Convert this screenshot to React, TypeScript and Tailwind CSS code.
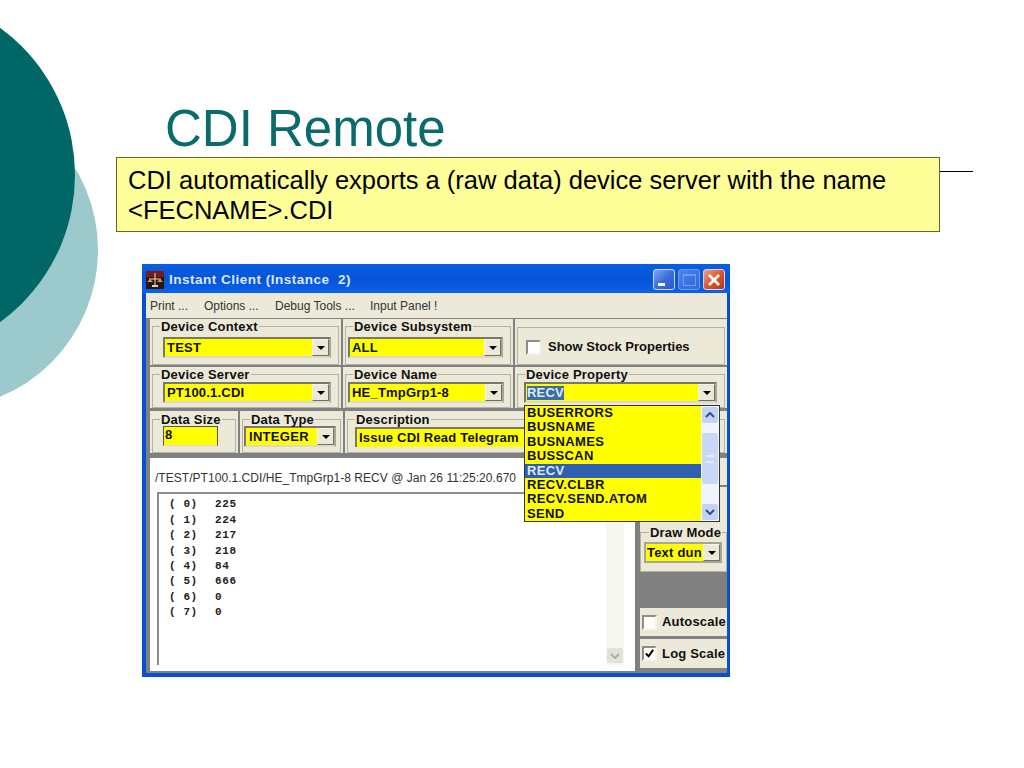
import { ReactNode } from "react";

const values = [
  ["( 0)", "225"],
  ["( 1)", "224"],
  ["( 2)", "217"],
  ["( 3)", "218"],
  ["( 4)", "84"],
  ["( 5)", "666"],
  ["( 6)", "0"],
  ["( 7)", "0"],
];

const properties = ["BUSERRORS", "BUSNAME", "BUSNAMES", "BUSSCAN", "RECV", "RECV.CLBR", "RECV.SEND.ATOM", "SEND"];

function ArrowButton() {
  return (
    <div className="flex h-[17px] w-[17px] shrink-0 items-center justify-center border border-b-[#6f6f66] border-l-[#f5f3ea] border-r-[#6f6f66] border-t-[#f5f3ea] bg-[#ece9d8]">
      <div className="h-0 w-0 border-x-[4px] border-t-[4px] border-x-transparent border-t-black" />
    </div>
  );
}

// yellow combo with the sunken border
function Combo({ text, className }: { text: string; className: string }) {
  return (
    <div className={`flex h-[21px] items-center justify-between border-2 border-b-[#ddd9c8] border-l-[#77776a] border-r-[#a8a797] border-t-[#77776a] bg-[#ffff00] pl-[2px] ${className}`}>
      <span className="whitespace-nowrap">{text}</span>
      <ArrowButton />
    </div>
  );
}

function Group({
  title,
  className,
  inner = "px-[8px]",
  children,
}: {
  title?: string;
  className: string;
  inner?: string;
  children: ReactNode;
}) {
  return (
    <div className={`shrink-0 bg-[#ece9d8] px-[2px] ${className}`}>
      <fieldset className={`h-full min-w-0 border border-[#b4b2a2] ${inner}`}>
        {title && <legend className="-ml-[1px] px-[1px] leading-[11px] whitespace-nowrap">{title}</legend>}
        {children}
      </fieldset>
    </div>
  );
}

function Check({ checked }: { checked?: boolean }) {
  return (
    <div className="flex h-[15px] w-[15px] shrink-0 items-center justify-center border-2 border-b-[#f4f3ec] border-l-[#8f8e84] border-r-[#f4f3ec] border-t-[#8f8e84] bg-white">
      {checked && (
        <svg viewBox="0 0 12 12" className="h-[11px] w-[11px]">
          <path d="M2 6l3 3 5-7" fill="none" stroke="#000" strokeWidth="2.2" />
        </svg>
      )}
    </div>
  );
}

function CaptionButton({ kind }: { kind: "min" | "max" | "close" }) {
  const bg =
    kind === "close"
      ? "border-[#cfdcf6] bg-gradient-to-br from-[#f0a08a] via-[#d9572f] to-[#b83413]"
      : kind === "min"
        ? "border-[#cfdcf6] bg-gradient-to-br from-[#7fa6ee] via-[#3b6fdc] to-[#2a57c8]"
        : "border-[#6f9af0] bg-gradient-to-br from-[#4f86ea] via-[#3a74e4] to-[#3468dc]";
  return (
    <div className={`relative flex h-[21px] w-[22px] items-center justify-center rounded-[3px] border ${bg}`}>
      {kind === "min" && <div className="mt-[10px] mr-[6px] h-[3px] w-[7px] bg-white" />}
      {kind === "max" && <div className="h-[12px] w-[13px] border border-t-2 border-[#6f9af0]" />}
      {kind === "close" && (
        <svg viewBox="0 0 14 14" className="h-[14px] w-[14px]">
          <path d="M2 2l10 10M12 2L2 12" stroke="#fff" strokeWidth="2.6" />
        </svg>
      )}
    </div>
  );
}

function AppIcon() {
  return (
    <svg viewBox="0 0 18 18" className="h-[18px] w-[18px] shrink-0">
      <rect width="18" height="18" fill="#2a1512" />
      <rect y="0" width="18" height="6" fill="#7a1a14" />
      <path d="M9 2v13M3 8h12" stroke="#e6e2d0" strokeWidth="1" />
      <path d="M1 11h6l-3-3zM11 11h6l-3-3z" fill="#e0a030" />
      <rect x="6" y="14" width="6" height="2" fill="#d8d4c0" />
    </svg>
  );
}

function InstantClient() {
  return (
    <div className="relative ml-[142px] mt-[32px] flex h-[413px] w-[588px] flex-col bg-[#0a4fd0] font-['Liberation_Sans',sans-serif] text-[13px] font-bold tracking-[0.2px] text-[#101010]">
      {/* title bar */}
      <div className="flex h-[29px] shrink-0 items-center bg-gradient-to-b from-[#0a5fe0] via-[#0754d8] to-[#0a62ea] pl-[4px] pr-[5px] pt-[2px]">
        <AppIcon />
        <span className="ml-[5px] whitespace-pre pt-[2px] text-[13.5px] tracking-[0.5px] text-[#dbe8ff]">Instant Client (Instance  2)</span>
        <div className="ml-auto flex gap-[3px]">
          <CaptionButton kind="min" />
          <CaptionButton kind="max" />
          <CaptionButton kind="close" />
        </div>
      </div>

      {/* menu */}
      <div className="ml-[4px] mr-[3px] flex h-[25px] shrink-0 items-center bg-[#ece9d8] pl-[4px] text-[12px] font-normal tracking-[0] text-[#333333]">
        <span className="w-[54px]">Print ...</span>
        <span className="w-[71px]">Options ...</span>
        <span className="w-[95px]">Debug Tools ...</span>
        <span>Input Panel !</span>
      </div>

      {/* client area */}
      <div className="mb-[4px] ml-[4px] mr-[3px] flex min-h-0 flex-1 flex-col bg-[#808080] pl-[4px] pt-[1px]">
        <div className="flex h-[46px] shrink-0 gap-[2px]">
          <Group title="Device Context" className="w-[191px] pt-[2px]">
            <Combo text="TEST" className="ml-[2px] mt-[5px] w-[168px]" />
          </Group>
          <Group title="Device Subsystem" className="w-[170px] pt-[2px]">
            <Combo text="ALL" className="-ml-[6px] mt-[5px] w-[155px]" />
          </Group>
          <Group className="w-[212px] pt-[8px]" inner="flex items-center gap-[7px] pl-[8px] pt-[2px]">
            <Check />
            <span className="whitespace-nowrap tracking-[0]">Show Stock Properties</span>
          </Group>
        </div>

        <div className="mt-[2px] flex h-[41px] shrink-0 gap-[2px]">
          <Group title="Device Server" className="w-[191px] pt-[2px]">
            <Combo text="PT100.1.CDI" className="ml-[2px] mt-[2px] w-[168px]" />
          </Group>
          <Group title="Device Name" className="w-[170px] pt-[2px]">
            <Combo text="HE_TmpGrp1-8" className="-ml-[6px] mt-[2px] w-[156px]" />
          </Group>
          <Group title="Device Property" className="w-[212px] pt-[2px]">
            <div className="-ml-[2px] mt-[2px] flex h-[21px] w-[193px] items-center justify-between border-2 border-b-[#ddd9c8] border-l-[#77776a] border-r-[#a8a797] border-t-[#77776a] bg-[#ffff00] pl-[1px]">
              <span className="bg-[#3a6ea5] leading-[14px] text-[#dfe8ff]">RECV</span>
              <ArrowButton />
            </div>
          </Group>
        </div>

        <div className="mt-[3px] flex h-[42px] shrink-0 gap-[2px]">
          <Group title="Data Size" className="w-[88px] pt-[3px]">
            <div className="ml-[2px] mt-[1px] h-[20px] w-[55px] border border-b-[#ddd9c8] border-l-[#55554c] border-r-[#55554c] border-t-[#55554c] bg-[#ffff00] pl-[1px] leading-[16px]">8</div>
          </Group>
          <Group title="Data Type" className="w-[103px] pt-[3px]">
            <Combo text="INTEGER" className="-ml-[7px] mt-[1px] w-[92px] pl-[3px] tracking-[0.3px]" />
          </Group>
          <Group title="Description" className="w-[382px] pt-[3px]">
            <div className="-ml-[1px] mt-[2px] flex h-[20px] items-center border-l-2 border-t-2 border-[#77776a] bg-[#ffff00] pl-[2px]">Issue CDI Read Telegram</div>
          </Group>
        </div>

        {/* plot + side column */}
        <div className="mt-[5px] flex min-h-0 flex-1 pb-[2px]">
          <div className="flex w-[485px] shrink-0 flex-col bg-white px-[5px]">
            <div className="flex h-[34px] shrink-0 items-center pt-[5px] text-[12px] font-normal tracking-[0.04px] text-[#333333]">
              /TEST/PT100.1.CDI/HE_TmpGrp1-8 RECV @ Jan 26 11:25:20.670
            </div>
            <div className="mb-[6px] ml-[2px] mr-[6px] flex min-h-0 flex-1 border-l-2 border-t-2 border-[#8c8c8c]">
              <div className="flex-1 pl-[10px] pt-[3px] font-['Liberation_Mono',monospace] text-[11px] tracking-[0.6px] text-[#222222]">
                {values.map(([idx, val]) => (
                  <div key={idx} className="flex h-[15.4px] items-center whitespace-pre">
                    <span className="w-[46px]">{idx}</span>
                    <span>{val}</span>
                  </div>
                ))}
              </div>
              <div className="flex w-[18px] shrink-0 items-end justify-center bg-[#f7f7f2] pb-[2px]">
                <div className="flex h-[15px] w-[16px] items-center justify-center rounded-[2px] bg-[#dfe3dc]">
                  <svg viewBox="0 0 10 6" className="h-[6px] w-[10px]">
                    <path d="M1 1l4 4 4-4" fill="none" stroke="#a9b0a8" strokeWidth="2" />
                  </svg>
                </div>
              </div>
            </div>
          </div>

          <div className="ml-[5px] flex min-w-0 flex-1 flex-col">
            <div className="h-[27px] shrink-0 bg-[#ece9d8]" />
            <div className="mt-[2px] h-[35px] shrink-0 bg-[#ece9d8]" />
            <Group title="Draw Mode" className="h-[50px] w-full !px-0 pt-[5px]" inner="pl-[3px] pr-[2px] [&>legend]:ml-[5px]">
              <div className="mt-[4px] flex h-[21px] w-[78px] items-center justify-between border-2 border-[#a8a797] bg-[#ffff00] pl-[1px]">
                <span className="whitespace-nowrap">Text dun</span>
                <ArrowButton />
              </div>
            </Group>
            <div className="h-[36px] shrink-0" />
            <div className="flex h-[28px] shrink-0 items-center gap-[5px] bg-[#ece9d8] pl-[2px]">
              <Check />
              <span className="whitespace-nowrap">Autoscale</span>
            </div>
            <div className="mt-[3px] flex h-[29px] shrink-0 items-center gap-[5px] bg-[#ece9d8] pl-[2px]">
              <Check checked />
              <span className="whitespace-nowrap">Log Scale</span>
            </div>
          </div>
        </div>
      </div>

      {/* open Device Property list */}
      <div className="absolute left-[382px] top-[141px] flex h-[117px] w-[196px] border border-[#333333] bg-[#ffff00] tracking-[0.35px]">
        <div className="flex-1 pt-[0px] leading-[14.4px]">
          {properties.map((p) => (
            <div key={p} className={p === "RECV" ? "bg-[#2f5fb0] pl-[2px] text-[#dfe8ff]" : "pl-[2px]"}>
              {p}
            </div>
          ))}
        </div>
        <div className="flex w-[18px] shrink-0 flex-col items-center bg-[#f1f4fb] py-[1px]">
          <div className="flex h-[16px] w-[16px] items-center justify-center rounded-[2px] bg-[#c3d3f5]">
            <svg viewBox="0 0 10 6" className="h-[6px] w-[10px]">
              <path d="M1 5l4-4 4 4" fill="none" stroke="#33507f" strokeWidth="2" />
            </svg>
          </div>
          <div className="mt-[10px] flex h-[51px] w-[16px] items-center justify-center rounded-[2px] bg-[#c9d8f7]">
            <div className="h-[8px] w-[8px] border-y-2 border-[#e4ecfb]" />
          </div>
          <div className="mt-auto flex h-[16px] w-[16px] items-center justify-center rounded-[2px] bg-[#c3d3f5]">
            <svg viewBox="0 0 10 6" className="h-[6px] w-[10px]">
              <path d="M1 1l4 4 4-4" fill="none" stroke="#33507f" strokeWidth="2" />
            </svg>
          </div>
        </div>
      </div>
    </div>
  );
}

export default function App() {
  return (
    <div className="relative h-[768px] w-[1024px] overflow-hidden bg-white font-['Liberation_Sans',sans-serif]">
      {/* slide theme circles */}
      <div className="absolute left-[-220px] top-[91px] h-[318px] w-[318px] rounded-full bg-[#9cc9cb]" />
      <div className="absolute left-[-289px] top-[-7px] h-[364px] w-[364px] rounded-full bg-[#006666]" />

      <div className="relative pt-[100px]">
        <h1 className="ml-[165px] h-[57px] text-[51px] leading-[57px] text-[#0b6a6a]">CDI Remote</h1>
        <div className="flex items-start">
          <div className="ml-[116px] h-[75px] w-[824px] border border-[#666633] bg-[#ffff99] pl-[11px] pt-[7px] text-[25.5px] leading-[30px] text-black">
            <p>CDI automatically exports a (raw data) device server with the name</p>
            <p>&lt;FECNAME&gt;.CDI</p>
          </div>
          <div className="mt-[14px] h-px w-[33px] bg-black" />
        </div>
        <InstantClient />
      </div>
    </div>
  );
}
